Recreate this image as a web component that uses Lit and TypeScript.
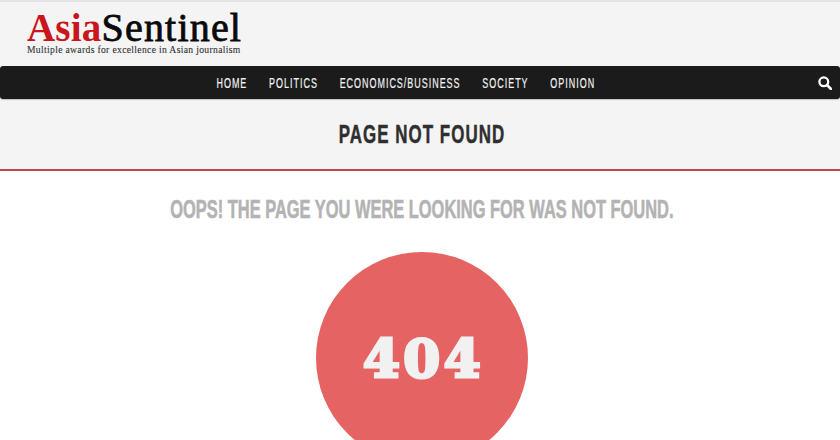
import { LitElement, html, css } from "lit";
import { customElement } from "lit/decorators.js";

@customElement("app-root")
export class AppRoot extends LitElement {
  static styles = css`
    :host { display: block; width: 840px; height: 440px; overflow: hidden; background: #fff; }
    .top { height: 64px; background: #f4f4f4; border-top: 2px solid #e4e4e4; padding-left: 27px; display: flex; flex-direction: column; }
    .logo { font-family: "Liberation Serif", serif; font-size: 40px; line-height: 30px; height: 30px; margin-top: 11px; color: #0a0a0a; letter-spacing: 1.2px; font-weight: 400; -webkit-text-stroke: 0.8px #0a0a0a; white-space: nowrap; }
    .logo b { color: #c8161c; font-size: 39px; font-weight: 700; letter-spacing: 0.2px; -webkit-text-stroke: 0; }
    .tag { font-family: "Liberation Serif", serif; font-size: 9.6px; line-height: 11px; margin-top: 1px; color: #333; letter-spacing: 0.34px; white-space: nowrap; -webkit-text-stroke: 0.1px #333; }
    nav { height: 33px; background: #1b1b1b; border-radius: 3px; position: relative; display: flex; justify-content: center; align-items: center; box-shadow: 0 1px 1px rgba(0,0,0,.25); }
    .links { display: flex; gap: 34px; flex: none; transform: scaleX(0.64); margin-right: 29px; }
    .links a { font-family: "Liberation Sans", sans-serif; color: #f2f2f2; font-size: 14px; letter-spacing: 1.55px; white-space: nowrap; -webkit-text-stroke: 0.2px #f2f2f2; }
    .search { position: absolute; right: 8px; top: 10px; width: 14px; height: 14px; }
    .band { height: 69px; margin-top: 1px; background: #f4f4f4; border-bottom: 2px solid #c0474a; display: flex; align-items: center; justify-content: center; }
    h1 { margin: 0 0 0 3px; flex: none; font-family: "Liberation Sans", sans-serif; font-size: 26px; font-weight: 700; color: #2f2f2f; letter-spacing: 1.6px; transform: scaleX(0.65); white-space: nowrap; -webkit-text-stroke: 0.5px #2f2f2f; }
    .sub { margin-top: 23px; height: 30px; display: flex; justify-content: center; }
    h2 { margin: 0 0 0 4px; flex: none; font-family: "Liberation Sans", sans-serif; font-size: 26.5px; line-height: 30px; font-weight: 700; color: #b3b3b3; transform: scaleX(0.62); white-space: nowrap; -webkit-text-stroke: 0.6px #b3b3b3; }
    .circle { width: 212px; height: 212px; box-sizing: border-box; padding-left: 3px; border-radius: 50%; background: #e56363; margin: 28px 0 0 316px; display: flex; align-items: center; justify-content: center; font-family: "DejaVu Serif", serif; font-weight: 700; font-size: 53px; color: #f1f1f1; letter-spacing: 3.5px; -webkit-text-stroke: 3.2px #f1f1f1; }
  `;
  render() {
    return html`
      <div class="top">
        <div class="logo"><b>Asia</b>Sentinel</div>
        <div class="tag">Multiple awards for excellence in Asian journalism</div>
      </div>
      <nav>
        <div class="links"><a>HOME</a><a>POLITICS</a><a>ECONOMICS/BUSINESS</a><a>SOCIETY</a><a>OPINION</a></div>
        <svg class="search" viewBox="0 0 14 14" fill="none" stroke="#fff"><circle cx="5.8" cy="5.8" r="4.4" stroke-width="2.3"/><path d="M9 9l4 4" stroke-width="2.6" stroke-linecap="round"/></svg>
      </nav>
      <div class="band"><h1>PAGE NOT FOUND</h1></div>
      <div class="sub"><h2>OOPS! THE PAGE YOU WERE LOOKING FOR WAS NOT FOUND.</h2></div>
      <div class="circle">404</div>
    `;
  }
}
